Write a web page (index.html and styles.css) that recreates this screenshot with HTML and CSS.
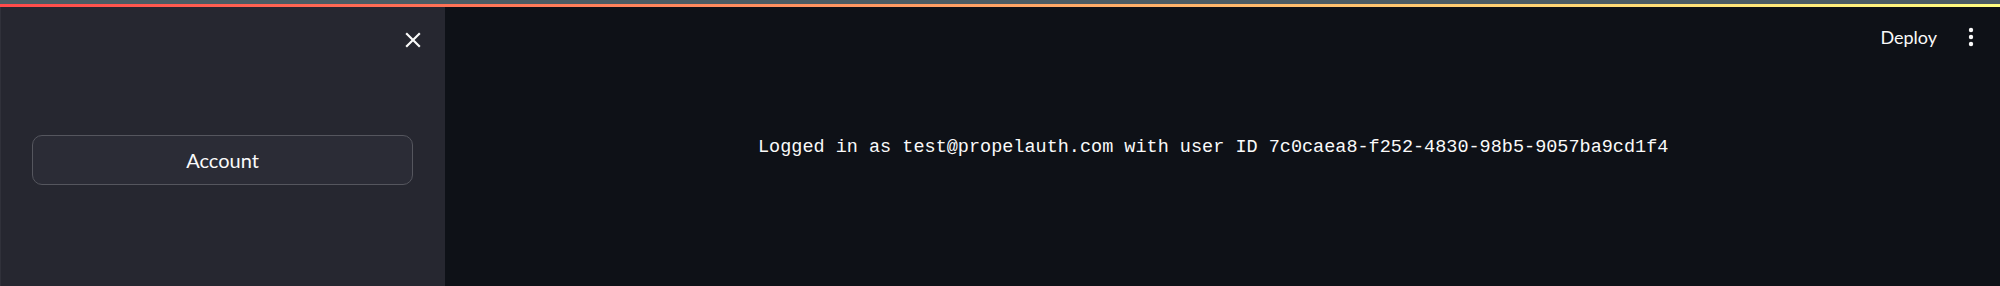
FILE: index.html
```html
<!DOCTYPE html>
<html>
<head>
<meta charset="utf-8">
<link rel="stylesheet" href="styles.css">
</head>
<body>
<div class="chrome"></div>
<div class="decoration"></div>
<div class="app">
  <aside class="sidebar">
    <div class="sidebar-header">
      <button class="close-btn" aria-label="Close sidebar">
        <svg viewBox="0 0 24 24" width="24" height="24"><path d="M19 6.41 17.59 5 12 10.59 6.41 5 5 6.41 10.59 12 5 17.59 6.41 19 12 13.41 17.59 19 19 17.59 13.41 12z" fill="#fafafa"/></svg>
      </button>
    </div>
    <div class="sidebar-content">
      <button class="account-btn">Account</button>
    </div>
  </aside>
  <main class="main">
    <header class="toolbar">
      <span class="deploy">Deploy</span>
      <button class="menu-btn" aria-label="Main menu">
        <svg viewBox="0 0 8 24" width="8" height="24"><circle cx="4" cy="5" r="2.2" fill="#fafafa"/><circle cx="4" cy="12" r="2.2" fill="#fafafa"/><circle cx="4" cy="19" r="2.2" fill="#fafafa"/></svg>
      </button>
    </header>
    <div class="block">
      <pre class="mono">Logged in as test@propelauth.com with user ID 7c0caea8-f252-4830-98b5-9057ba9cd1f4</pre>
    </div>
  </main>
</div>
</body>
</html>
```
FILE: styles.css
```css
html, body {
  margin: 0;
  padding: 0;
  height: 286px;
  overflow: hidden;
  background: #0e1117;
  font-family: "Lato", "Noto Sans", sans-serif;
  color: #fafafa;
}
.chrome {
  height: 4px;
  background: #4b5b63;
}
.decoration {
  height: 3px;
  background: linear-gradient(90deg, #ff4b4b, #fffd80);
}
.app {
  display: flex;
  height: 279px;
}
.sidebar {
  width: 445px;
  flex: none;
  background: #262730;
  box-shadow: inset 1px 0 0 #30313a;
  display: flex;
  flex-direction: column;
}
.sidebar-header {
  display: flex;
  justify-content: flex-end;
  padding: 20px 19px 0 0;
}
.close-btn {
  background: none;
  border: none;
  padding: 0;
  width: 26px;
  height: 26px;
  display: flex;
  align-items: center;
  justify-content: center;
}
.close-btn svg {
  width: 26px;
  height: 26px;
}
.sidebar-content {
  padding: 82px 32px 0 32px;
}
.account-btn {
  width: 381px;
  height: 50px;
  background: #2b2c36;
  border: 1px solid #55565e;
  border-radius: 10px;
  color: #fafafa;
  font-family: "Lato", "Noto Sans", sans-serif;
  font-size: 20px;
  padding: 0;
}
.main {
  flex: 1;
  display: flex;
  flex-direction: column;
  align-items: center;
}
.toolbar {
  align-self: stretch;
  display: flex;
  justify-content: flex-end;
  align-items: center;
  gap: 30px;
  padding: 16px 25px 0 0;
  height: 28px;
}
.deploy {
  font-size: 18px;
  color: #fafafa;
}
.menu-btn {
  background: none;
  border: none;
  padding: 0;
  display: flex;
}
.block {
  width: 929px;
  padding-top: 85px;
}
.mono {
  margin: 0;
  font-family: "Liberation Mono", "DejaVu Sans Mono", monospace;
  font-size: 18.5px;
  line-height: 24px;
  color: #fafafa;
}
```
